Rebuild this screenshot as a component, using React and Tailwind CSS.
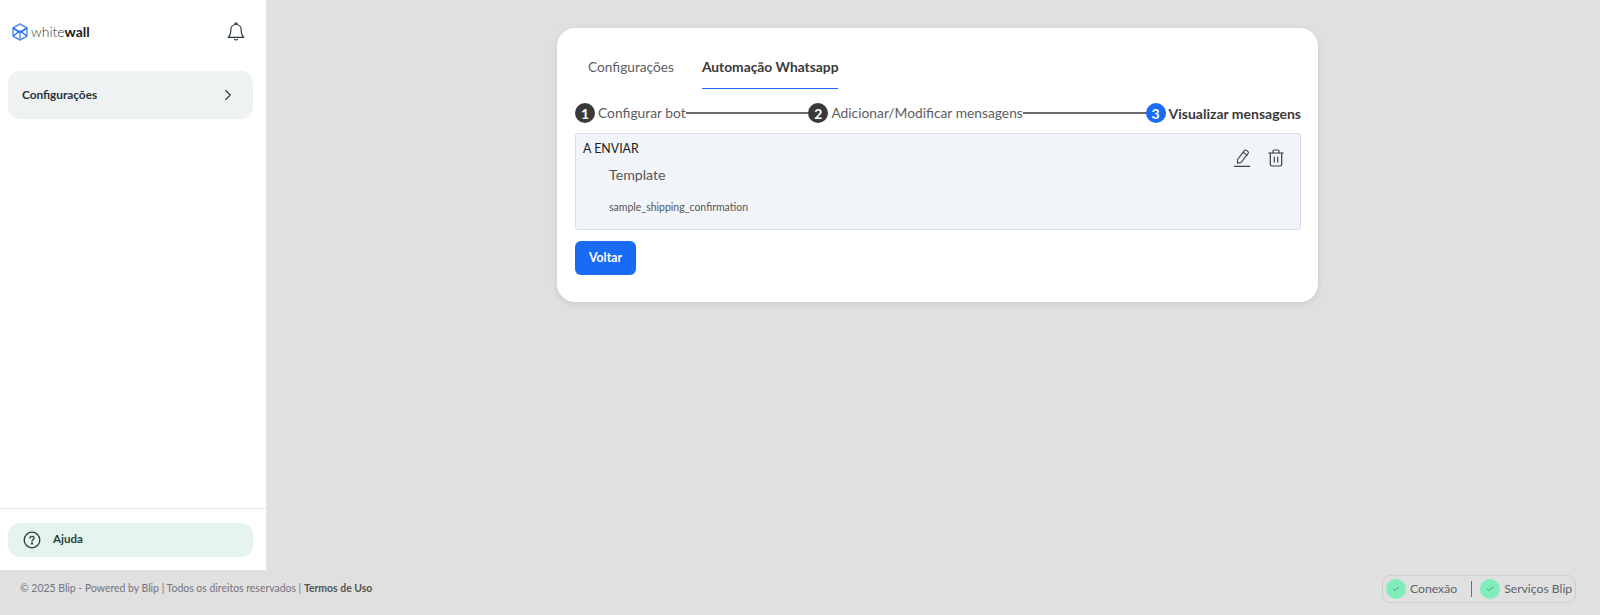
import React from 'react';
import { ChevronRight, Check } from 'lucide-react';

const Logo = () => (
  <svg width="16" height="18" viewBox="0 0 16 18" fill="none" stroke="#1f6bf5" strokeWidth="1.5" strokeLinejoin="round">
    <path d="M8 1 15 5v8l-7 4-7-4V5z" stroke="#5f8fe8" />
    <path d="M1 5l7 4.500 7-4.500" stroke="#1f6bf5" />
    <path d="M1 13l7-5 7 5" stroke="#1f6bf5" />
    <path d="M8 9v8" stroke="#5f8fe8" />
  </svg>
);

const Bell = () => (
  <svg width="18" height="20" viewBox="0 0 18 20" fill="none" stroke="#2f3b3b" strokeWidth="1.2" strokeLinejoin="round" strokeLinecap="round">
    <path d="M9 2.500c-3.200 0-5.200 2.500-5.200 5.300 0 3.500-.8 6-2.500 7.500h15.400c-1.700-1.500-2.500-4-2.500-7.500 0-2.800-2-5.300-5.200-5.300z" />
    <path d="M8 2.500V1.200h2v1.300" />
    <path d="M7.500 17.300c.5.900 2.500.900 3 0" />
  </svg>
);

const Pencil = () => (
  <svg width="16" height="18" viewBox="0 0 16 18" fill="none" stroke="#3f3f46" strokeWidth="1.100" strokeLinejoin="round" strokeLinecap="round">
    <path d="M3.500 10.500 10.300 1.600c.5-.6 1.300-.7 1.900-.3l1.600 1.100c.6.5.7 1.300.3 1.900L7.200 13.500l-3.700.6z" />
    <path d="M9 3.300l3.900 2.800" />
    <path d="M.5 17.300h15" strokeWidth="1.300" />
  </svg>
);

const Trash = () => (
  <svg width="16" height="18" viewBox="0 0 16 18" fill="none" stroke="#3f3f46" strokeWidth="1.200" strokeLinejoin="round" strokeLinecap="round">
    <path d="M.8 4h14.400" />
    <path d="M5 4V2.200C5 1.500 5.500 1 6.200 1h3.600c.7 0 1.200.5 1.200 1.200V4" />
    <path d="M2.300 4v11.200c0 1 .8 1.800 1.800 1.800h7.800c1 0 1.800-.8 1.800-1.800V4" />
    <path d="M6.300 8v5M9.700 8v5" />
  </svg>
);

const Help = () => (
  <svg width="18" height="18" viewBox="0 0 18 18" fill="none" stroke="#24433c" strokeWidth="1.300">
    <circle cx="9" cy="9" r="7.800" />
    <path d="M6.900 7.100c0-1.200 1-1.800 2.100-1.800s2.100.7 2.100 1.800c0 1.500-2.100 1.500-2.100 3" strokeLinecap="round" />
    <circle cx="9" cy="12.500" r=".5" fill="#24433c" />
  </svg>
);

const StepDot = ({ n, active }) => (
  <span className={`w-5 h-5 shrink-0 rounded-full flex items-center justify-center text-white text-[14px] font-bold ${active ? 'bg-[#1a6bf4]' : 'bg-[#3a3a3a]'}`}>
    {n}
  </span>
);

const Status = ({ label }) => (
  <div className="flex items-center gap-[4px] whitespace-nowrap">
    <span className="w-5 h-5 rounded-full bg-[#7fedb9] flex items-center justify-center">
      <Check size={8} strokeWidth={2} className="text-[#3f6b57]" />
    </span>
    <span className="text-[12.200px] text-[#62626c]">{label}</span>
  </div>
);

export default function App() {
  return (
    <div className="h-[615px] w-[1600px] flex flex-col bg-[#e0e0e0] overflow-hidden font-['Lato',sans-serif]">
      <div className="flex flex-1 min-h-0">
        {/* Sidebar */}
        <aside className="w-[267px] shrink-0 bg-white border-r border-[#e5e5e5] flex flex-col">
          <div className="h-[64px] flex items-center justify-between pl-3 pr-[21px]">
            <div className="flex items-center gap-[3px]">
              <Logo />
              <span className="text-[14px] mb-[2px] font-light text-[#3a3a3a]">white<span className="font-bold text-[#1c1c1c]">wall</span></span>
            </div>
            <Bell />
          </div>
          <div className="px-2 pt-[7px] flex-1">
            <button className="w-[245px] h-12 rounded-xl bg-[#eef2f3] flex items-center justify-between pl-[14px] pr-4 text-[11.800px] font-bold text-[#29333a]">
              Configurações
              <ChevronRight size={18} strokeWidth={1.500} className="text-[#3a3a3a]" />
            </button>
          </div>
          <div className="border-t border-[#e5e5e5] h-[62px] pt-[14px] px-2">
            <button className="w-[245px] h-[34px] rounded-xl bg-[#e5f4ef] flex items-center gap-[12px] pl-[15px] text-[11.500px] font-bold text-[#24433c]">
              <Help />
              <span className="mb-[2px]">Ajuda</span>
            </button>
          </div>
        </aside>

        {/* Main */}
        <main className="flex-1 pt-[28px] pl-[290px]">
          <div className="w-[761px] h-[274px] bg-white rounded-[18px] shadow-[0_2px_6px_rgba(0,0,0,0.1)] pl-[18px] pr-[17px]">
            <div className="flex gap-[28px] pt-[18px] pl-[13px]">
              <div className="h-[43px] flex items-center text-[13.700px] text-[#5d5d5d]">Configurações</div>
              <div className="h-[43px] flex items-center text-[13.800px] font-bold text-[#3a3a3a] border-b-[1.500px] border-[#1a6bf4]">Automação Whatsapp</div>
            </div>
            <div className="flex items-center h-[22px] mt-[13px] text-[13.800px]">
              <StepDot n="1" />
              <span className="ml-[3px] text-[#5d5d5d]">Configurar bot</span>
              <span className="flex-1 h-[2px] bg-[#6a6a6a]" />
              <StepDot n="2" />
              <span className="ml-[3px] text-[#5d5d5d]">Adicionar/Modificar mensagens</span>
              <span className="flex-1 h-[2px] bg-[#6a6a6a]" />
              <StepDot n="3" active />
              <span className="ml-[3px] text-[14px] font-bold text-[#3a3a3a]">Visualizar mensagens</span>
            </div>
            <div className="mt-[9px] h-[97px] bg-[#f1f4f9] border border-[#d5deea] rounded-[3px] pl-[7px] pt-[7px] flex justify-between">
              <div>
                <div className="text-[12.400px] leading-[16px] text-[#1c1c1c]">A ENVIAR</div>
                <div className="ml-[26px] mt-[8px] text-[14.200px] leading-[20px] text-[#565656]">Template</div>
                <div className="ml-[26px] mt-[15px] text-[10.500px] leading-[14px] text-[#565656]">sample_shipping_confirmation</div>
              </div>
              <div className="flex gap-[18px] pt-[8px] pr-[16px] items-start">
                <Pencil />
                <Trash />
              </div>
            </div>
            <button className="mt-[11px] w-[61px] h-[34px] rounded-md bg-[#1a6bf4] text-white text-[12.300px] font-bold">Voltar</button>
          </div>
        </main>
      </div>

      {/* Footer */}
      <footer className="h-[45px] shrink-0 flex items-center justify-between pl-5 pr-6 pb-[7px]">
        <p className="text-[10.450px] text-[#74747c]">
          © 2025 Blip - Powered by Blip | Todos os direitos reservados | <span className="font-bold text-[#555]">Termos de Uso</span>
        </p>
        <div className="w-[194px] h-7 rounded-lg border border-[#cfcfcf] flex items-center pl-[3px]">
          <Status label="Conexão" />
          <span className="w-px h-4 shrink-0 bg-[#707070] ml-[14px] mr-[8px]" />
          <Status label="Serviços Blip" />
        </div>
      </footer>
    </div>
  );
}
